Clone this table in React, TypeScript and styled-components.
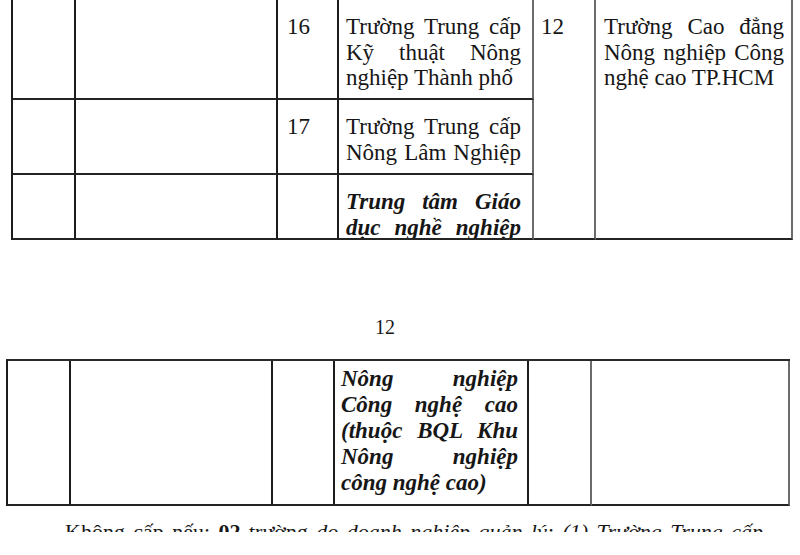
import React from "react";
import styled, { createGlobalStyle } from "styled-components";

const GlobalStyle = createGlobalStyle`
  html, body {
    margin: 0;
    padding: 0;
    background: #ffffff;
  }
  body {
    font-family: "Liberation Serif", "Times New Roman", serif;
    color: #161616;
    overflow: hidden;
  }
`;

const Page = styled.div`
  width: 800px;
  height: 555px;
  overflow: hidden;
  display: flex;
  flex-direction: column;
`;

const Grid = styled.div<{ $cols: string; $rows: string; $left: number; $top?: boolean }>`
  display: grid;
  grid-template-columns: ${(p) => p.$cols};
  grid-template-rows: ${(p) => p.$rows};
  margin-left: ${(p) => p.$left}px;
  width: max-content;
  border-left: 2px solid #1c1c1c;
  border-top: ${(p) => (p.$top ? "2px solid #2a2a2a" : "none")};
`;

const Cell = styled.div<{ $span?: number; $edge?: "dark" | "light"; $pad?: string }>`
  box-sizing: border-box;
  grid-row: ${(p) => (p.$span ? `span ${p.$span}` : "auto")};
  border-right: 2px solid ${(p) => (p.$edge === "light" ? "#6b6b6b" : "#1c1c1c")};
  border-bottom: 2px solid #242424;
  padding: ${(p) => p.$pad ?? "14px 8px 0 8px"};
  font-size: 23px;
  line-height: 25.5px;
  overflow: hidden;
`;

const Line = styled.span<{ $justify?: boolean; $strong?: boolean }>`
  display: block;
  white-space: nowrap;
  text-align: ${(p) => (p.$justify ? "justify" : "left")};
  text-align-last: ${(p) => (p.$justify ? "justify" : "left")};
  font-weight: ${(p) => (p.$strong ? 700 : 400)};
  font-style: ${(p) => (p.$strong ? "italic" : "normal")};
  line-height: ${(p) => (p.$strong ? "26px" : "25.5px")};
`;

const PageNumber = styled.div`
  margin-top: 75px;
  padding-right: 30px;
  text-align: center;
  font-size: 20px;
  line-height: 24px;
`;

const ClippedNote = styled.div`
  margin-top: 13px;
  height: 13px;
  overflow: hidden;
  padding-left: 65px;
  width: 698px;
`;

const NoteText = styled.div`
  font-size: 22px;
  line-height: 22px;
  white-space: nowrap;
  text-align: justify;
  text-align-last: justify;
  margin-top: 2px;
  b {
    font-weight: 700;
  }
  i {
    font-style: italic;
  }
`;

type Row = { lines: { text: string; justify?: boolean }[]; num?: string; strong?: boolean };

const topRows: Row[] = [
  {
    num: "16",
    lines: [
      { text: "Trường Trung cấp", justify: true },
      { text: "Kỹ thuật Nông", justify: true },
      { text: "nghiệp Thành phố" },
    ],
  },
  {
    num: "17",
    lines: [
      { text: "Trường Trung cấp", justify: true },
      { text: "Nông Lâm Nghiệp", justify: true },
    ],
  },
  {
    strong: true,
    lines: [
      { text: "Trung tâm Giáo", justify: true },
      { text: "dục nghề nghiệp", justify: true },
    ],
  },
];

const bottomLines = [
  { text: "Nông nghiệp", justify: true },
  { text: "Công nghệ cao", justify: true },
  { text: "(thuộc BQL Khu", justify: true },
  { text: "Nông nghiệp", justify: true },
  { text: "công nghệ cao)" },
];

export default function App() {
  return (
    <Page>
      <GlobalStyle />
      <Grid $left={11} $cols="63px 202px 61px 195px 62px 197px" $rows="100px 75px 65px">
        {topRows.map((row, i) => (
          <React.Fragment key={i}>
            <Cell />
            <Cell />
            <Cell $pad="14px 8px 0 9px">{row.num}</Cell>
            <Cell $edge="light" $pad="14px 11px 0 7px">
              {row.lines.map((l) => (
                <Line key={l.text} $justify={l.justify} $strong={row.strong}>
                  {l.text}
                </Line>
              ))}
            </Cell>
            {i === 0 && (
              <>
                <Cell $span={3} $edge="light" $pad="14px 6px 0 7px">
                  12
                </Cell>
                <Cell $span={3} $edge="light" $pad="14px 7px 0 8px">
                  <Line $justify>Trường Cao đẳng</Line>
                  <Line $justify>Nông nghiệp Công</Line>
                  <Line>nghệ cao TP.HCM</Line>
                </Cell>
              </>
            )}
          </React.Fragment>
        ))}
      </Grid>

      <PageNumber>12</PageNumber>

      <Grid $left={6} $top $cols="63px 202px 62px 194px 63px 198px" $rows="145px" style={{ marginTop: 20 }}>
        <Cell />
        <Cell />
        <Cell />
        <Cell $pad="5px 9px 0 6px">
          {bottomLines.map((l, i) => (
            <Line key={i} $justify={l.justify} $strong>
              {l.text}
            </Line>
          ))}
        </Cell>
        <Cell $edge="light" />
        <Cell $edge="light" />
      </Grid>

      <ClippedNote>
        <NoteText>
          Không cấp nếu: <b>02</b> trường <i>do doanh nghiệp quản lý: (1) Trường Trung cấp</i>
        </NoteText>
      </ClippedNote>
    </Page>
  );
}
